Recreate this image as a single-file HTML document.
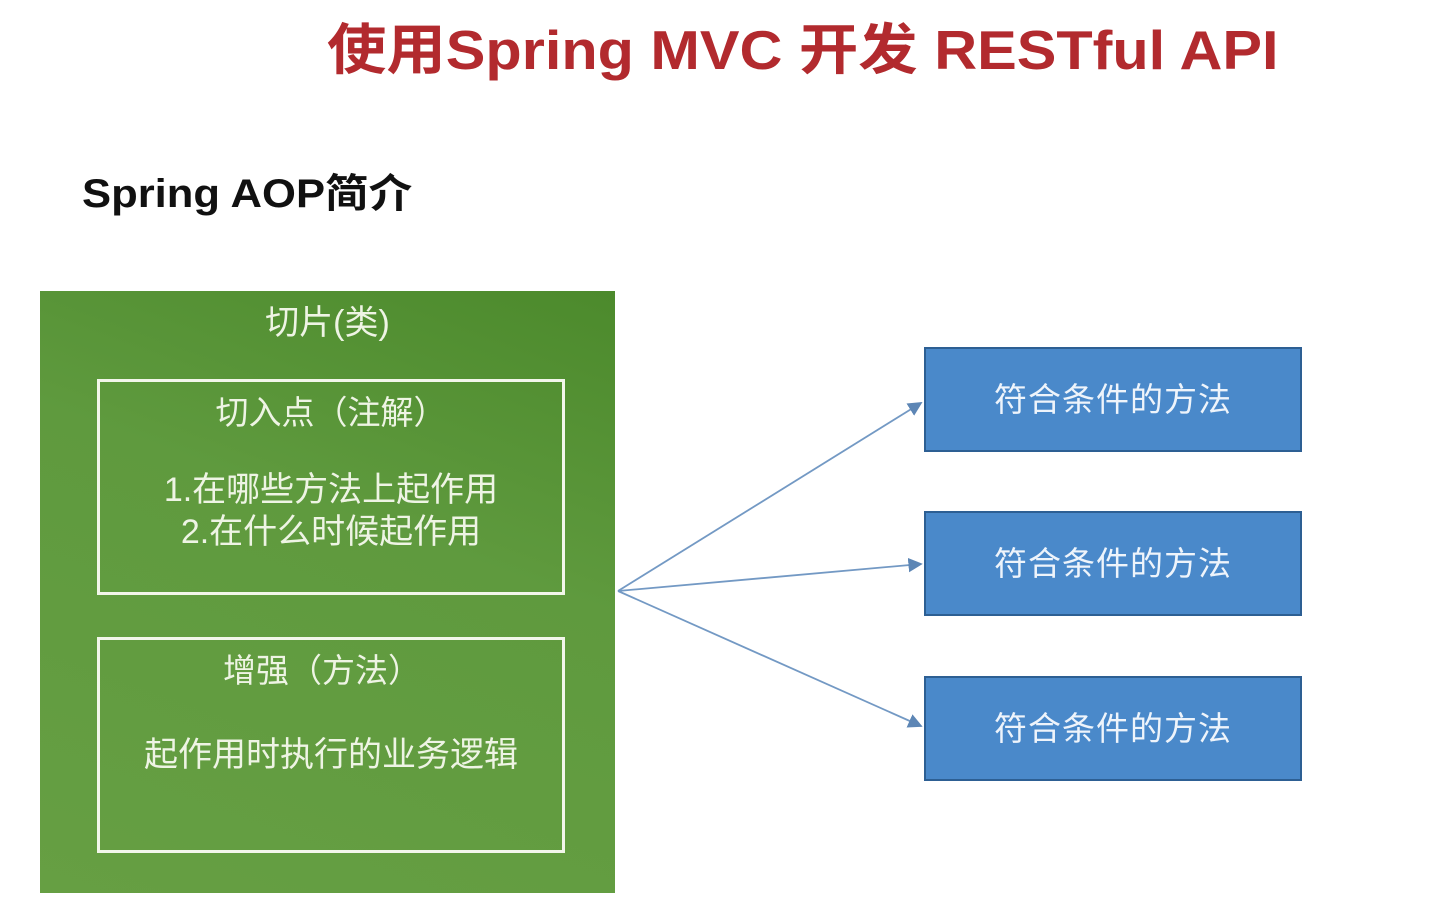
<!DOCTYPE html>
<html><head><meta charset="utf-8"><style>
body{margin:0;width:1443px;height:904px;background:#fff;position:relative;overflow:hidden;font-family:"Liberation Sans","Noto Sans CJK SC",sans-serif}
.a{position:absolute}
.t{color:#eef4e4;text-align:center;white-space:nowrap}
.bb{position:absolute;left:924px;width:374px;height:101px;background:#4a89ca;border:2px solid #2d5f93;color:#eef4fb;font-size:33px;text-align:center;line-height:101px;letter-spacing:1px}
</style></head><body>
<div class="a" style="left:327px;top:5px;font-size:55px;font-weight:bold;color:#b22a2e;white-space:nowrap;transform:scaleX(1.08);transform-origin:0 0">使用Spring MVC 开发 RESTful API</div>
<div class="a" style="left:82px;top:161px;font-size:40px;font-weight:bold;color:#111;white-space:nowrap;transform:scaleX(1.09);transform-origin:0 0">Spring AOP简介</div>
<div class="a" style="left:40px;top:291px;width:575px;height:602px;background:linear-gradient(200deg,#4c8a2c 0%,#5f9a3e 40%,#669f43 100%)"></div>
<div class="a t" style="left:40px;top:295px;width:575px;font-size:34px">切片(类)</div>
<div class="a" style="left:97px;top:379px;width:462px;height:210px;border:3px solid #f2f6ea"></div>
<div class="a t" style="left:97px;top:386px;width:468px;font-size:33px">切入点（注解）</div>
<div class="a t" style="left:97px;top:469px;width:468px;font-size:34px;line-height:42px">1.在哪些方法上起作用<br>2.在什么时候起作用</div>
<div class="a" style="left:97px;top:637px;width:462px;height:210px;border:3px solid #f2f6ea"></div>
<div class="a t" style="left:97px;top:644px;width:450px;font-size:33px">增强（方法）</div>
<div class="a t" style="left:97px;top:727px;width:468px;font-size:34px">起作用时执行的业务逻辑</div>
<svg class="a" style="left:0;top:0" width="1443" height="904">
<defs><marker id="m" markerWidth="8" markerHeight="8" refX="7" refY="4" orient="auto"><path d="M0,0 L8,4 L0,8 z" fill="#5d86b5"/></marker></defs>
<g stroke="#7399c4" stroke-width="1.8" fill="none">
<line x1="618" y1="591" x2="921" y2="403" marker-end="url(#m)"/>
<line x1="618" y1="591" x2="921" y2="564" marker-end="url(#m)"/>
<line x1="618" y1="591" x2="921" y2="726" marker-end="url(#m)"/>
</g></svg>
<div class="bb" style="top:347px">符合条件的方法</div>
<div class="bb" style="top:511px">符合条件的方法</div>
<div class="bb" style="top:676px">符合条件的方法</div>
</body></html>
